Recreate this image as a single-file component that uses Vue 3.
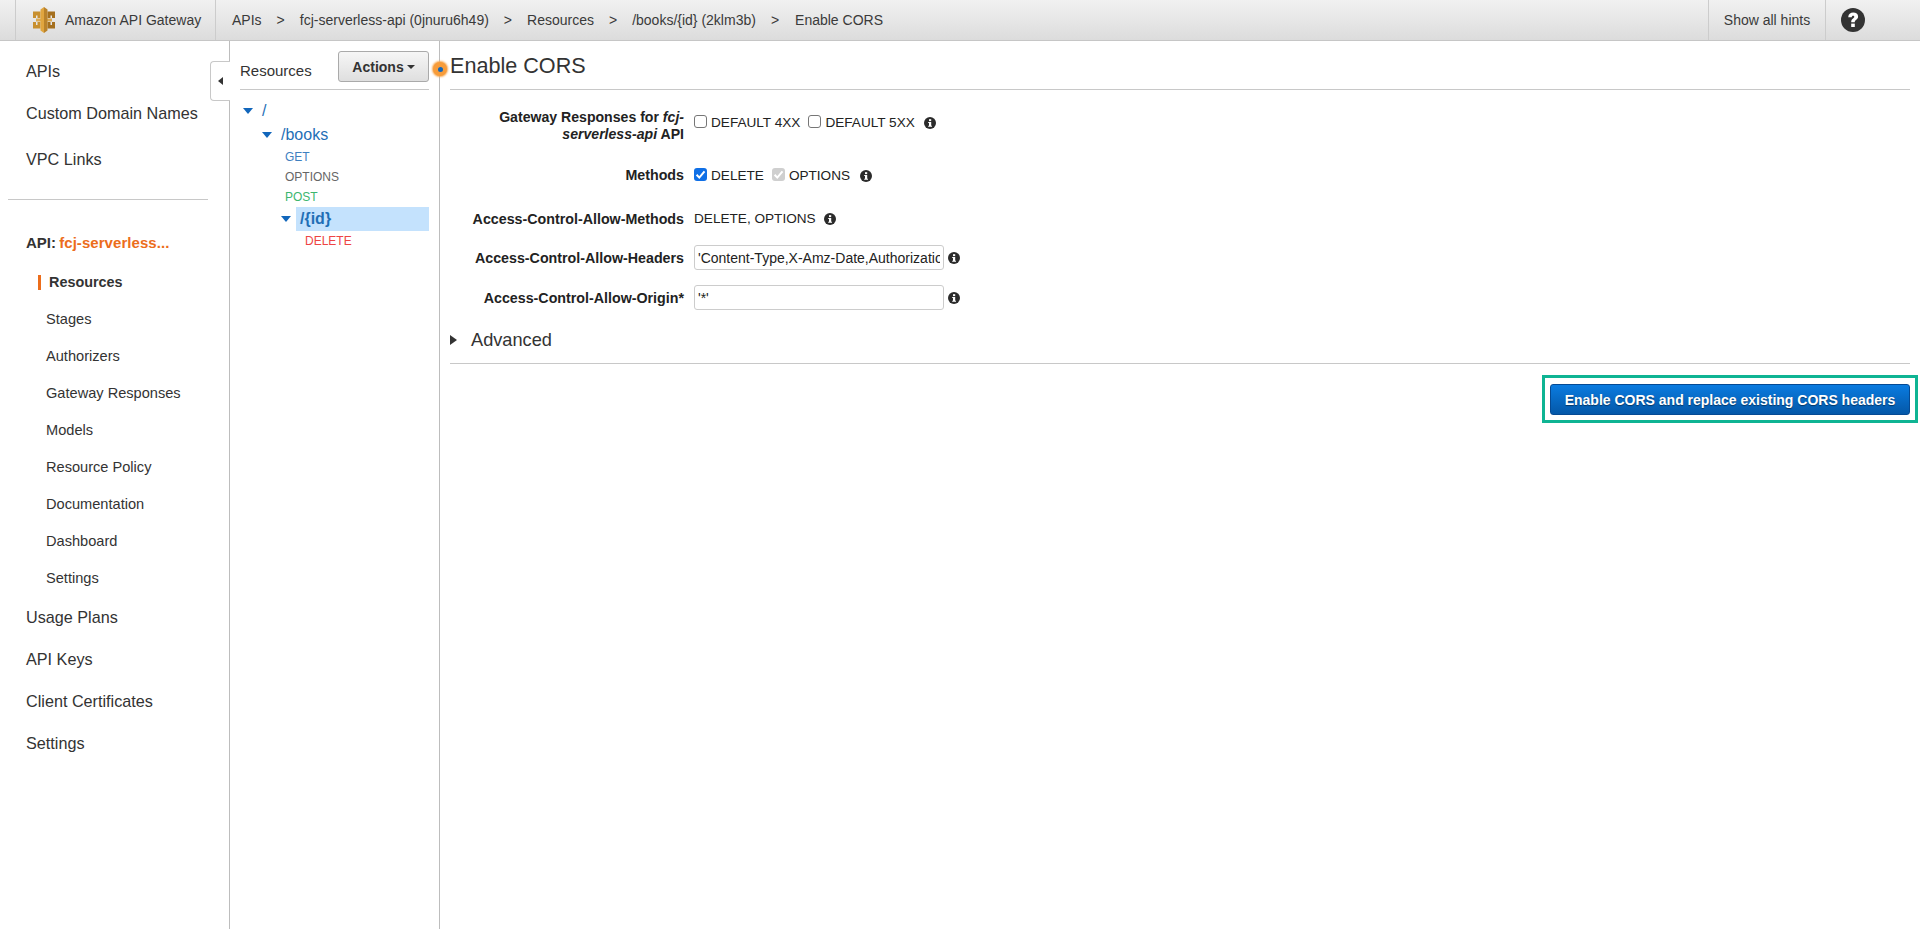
<script setup>
const crumbs = ['APIs', 'fcj-serverless-api (0jnuru6h49)', 'Resources', '/books/{id} (2klm3b)', 'Enable CORS']
const subNav = ['Stages', 'Authorizers', 'Gateway Responses', 'Models', 'Resource Policy', 'Documentation', 'Dashboard', 'Settings']
const bottomNav = ['Usage Plans', 'API Keys', 'Client Certificates', 'Settings']
</script>

<template>
  <div class="page">
    <header class="topbar">
      <div class="brand">
        <svg class="logo" viewBox="0 0 22 26" width="22" height="26">
          <path d="M0 4.5H7.5V11H4.5V8.5H3V11H0Z" fill="#c8902f" />
          <path d="M0 15H3V18H4.5V15H7.5V21.5H0Z" fill="#c8902f" />
          <path d="M14.5 4.5H22V11H19V8.5H17.5V11H14.5Z" fill="#a5701f" />
          <path d="M14.5 15H17.5V18H19V15H22V21.5H14.5Z" fill="#a5701f" />
          <rect x="3" y="11.5" width="16" height="3" fill="#dcaa52" />
          <path d="M7.5 2.5 11 0V26L7.5 23.5Z" fill="#e0a53f" />
          <path d="M11 0 14.5 2.5V23.5L11 26Z" fill="#b9822b" />
        </svg>
        <span>Amazon API Gateway</span>
      </div>
      <nav class="crumbs">
        <template v-for="(c, i) in crumbs" :key="c">
          <span v-if="i" class="sep">&gt;</span>
          <span class="crumb">{{ c }}</span>
        </template>
      </nav>
      <div class="hints">Show all hints</div>
      <div class="help">
        <svg viewBox="0 0 24 24" width="24" height="24">
          <circle cx="12" cy="12" r="12" fill="#333" />
          <path d="M7.2 9.2C7.4 6.2 9.4 4.6 12.2 4.6c2.9 0 4.9 1.6 4.9 4 0 1.7-.9 2.7-2.1 3.5-1 .7-1.2 1.1-1.2 2.2h-3.6c0-2.1.5-3 1.8-3.9.9-.7 1.3-1 1.3-1.6 0-.7-.5-1.1-1.2-1.1-.9 0-1.3.5-1.4 1.6Z" fill="#fff" />
          <rect x="10.2" y="15.6" width="3.6" height="3.4" fill="#fff" />
        </svg>
      </div>
    </header>

    <div class="body">
      <aside class="sidebar">
        <a class="nav first">APIs</a>
        <a class="nav second">Custom Domain Names</a>
        <a class="nav third">VPC Links</a>
        <hr class="nav-rule" />
        <div class="api-name"><b>API:</b> <b class="orange">fcj-serverless...</b></div>
        <div class="sub active">Resources</div>
        <div v-for="s in subNav" :key="s" class="sub">{{ s }}</div>
        <div class="bottom-nav">
          <a v-for="b in bottomNav" :key="b" class="nav bottom">{{ b }}</a>
        </div>
        <div class="collapse"><i></i></div>
      </aside>

      <section class="resources">
        <div class="res-head">
          <span>Resources</span>
          <button class="actions">Actions<i></i></button>
        </div>
        <ul class="tree">
          <li class="node"><i class="caret"></i>/</li>
          <li class="node lvl1"><i class="caret"></i>/books</li>
          <li class="method get">GET</li>
          <li class="method opt">OPTIONS</li>
          <li class="method post">POST</li>
          <li class="node lvl2"><i class="caret"></i><span class="selected">/{id}</span></li>
          <li class="method del">DELETE</li>
        </ul>
        <span class="pulse"><i></i></span>
      </section>

      <main class="main">
        <h1>Enable CORS</h1>
        <div class="form">
          <div class="row row-gw">
            <label class="lab">Gateway Responses for <em>fcj-serverless-api</em> API</label>
            <div class="val">
              <span class="box"></span><span class="opt-text">DEFAULT 4XX</span>
              <span class="box box2"></span><span class="opt-text">DEFAULT 5XX</span>
              <svg class="info" viewBox="0 0 12 12"><use href="#info" /></svg>
            </div>
          </div>
          <div class="row row-m">
            <label class="lab">Methods</label>
            <div class="val">
              <span class="box on"><svg viewBox="0 0 13 13"><path d="M2.6 6.8 5.3 9.6 10.5 3.4" fill="none" stroke="#fff" stroke-width="2" /></svg></span><span class="opt-text">DELETE</span>
              <span class="box box2 dis"><svg viewBox="0 0 13 13"><path d="M2.6 6.8 5.3 9.6 10.5 3.4" fill="none" stroke="#fff" stroke-width="2" /></svg></span><span class="opt-text">OPTIONS</span>
              <svg class="info" viewBox="0 0 12 12"><use href="#info" /></svg>
            </div>
          </div>
          <div class="row row-a">
            <label class="lab">Access-Control-Allow-Methods</label>
            <div class="val up">
              <span>DELETE, OPTIONS</span>
              <svg class="info" viewBox="0 0 12 12"><use href="#info" /></svg>
            </div>
          </div>
          <div class="row row-i">
            <label class="lab">Access-Control-Allow-Headers</label>
            <div class="val">
              <input class="input" value="'Content-Type,X-Amz-Date,Authorization,X-Api-Key,X-Amz-Security-Token'" />
              <svg class="info tight" viewBox="0 0 12 12"><use href="#info" /></svg>
            </div>
          </div>
          <div class="row row-i">
            <label class="lab">Access-Control-Allow-Origin*</label>
            <div class="val">
              <input class="input" value="'*'" />
              <svg class="info tight" viewBox="0 0 12 12"><use href="#info" /></svg>
            </div>
          </div>
        </div>
        <div class="advanced"><i></i>Advanced</div>
        <div class="actions-row">
          <div class="highlight">
            <button class="primary">Enable CORS and replace existing CORS headers</button>
          </div>
        </div>
      </main>
    </div>

    <svg width="0" height="0" class="defs">
      <defs>
        <g id="info">
          <circle cx="6" cy="6" r="6" fill="#2b2b2b" />
          <rect x="5" y="2.2" width="2.2" height="1.9" fill="#fff" />
          <path d="M4.2 5h3v3.7h.8v1.1H4.2V8.7H5V6.1h-.8Z" fill="#fff" />
        </g>
      </defs>
    </svg>
  </div>
</template>

<style>
html, body { margin: 0; background: #fff; }
</style>

<style scoped>
.page {
  height: 929px;
  display: flex;
  flex-direction: column;
  overflow: hidden;
  font-family: "Liberation Sans", Arial, sans-serif;
  color: #333;
  font-size: 14px;
}
.defs { position: absolute; }

.topbar {
  height: 40px;
  flex: none;
  display: flex;
  align-items: center;
  background: linear-gradient(#f1f1f1, #dcdcdc);
  border-bottom: 1px solid #c6c6c6;
  padding-left: 15px;
  font-size: 14px;
  color: #3a3a3a;
}
.brand {
  display: flex;
  align-items: center;
  height: 100%;
  width: 201px;
  box-sizing: border-box;
  border-left: 1px solid #ccc;
  border-right: 1px solid #ccc;
  padding-left: 17px;
}
.logo { margin-right: 10px; }
.crumbs {
  flex: 1;
  display: flex;
  align-items: center;
  padding-left: 16px;
}
.sep { margin: 0 15px 0 15px; }
.crumb:last-child { margin-left: 1px; }
.hints {
  height: 100%;
  width: 118px;
  box-sizing: border-box;
  border-left: 1px solid #ccc;
  border-right: 1px solid #ccc;
  display: flex;
  align-items: center;
  justify-content: center;
}
.help {
  width: 94px;
  height: 100%;
  display: flex;
  align-items: center;
  box-sizing: border-box;
  padding-left: 15px;
}

.body { flex: 1; display: flex; min-height: 0; }

.sidebar {
  width: 230px;
  flex: none;
  box-sizing: border-box;
  border-right: 1px solid #bdbdbd;
  position: relative;
  padding-top: 20px;
}
.nav {
  display: block;
  font-size: 16.2px;
  line-height: 20px;
  padding-left: 26px;
  color: #333;
}
.second { margin-top: 22px; }
.third { margin-top: 26px; }
.nav-rule {
  border: 0;
  border-top: 1px solid #c8c8c8;
  margin: 30px 21px 0 8px;
}
.api-name {
  padding-left: 26px;
  margin-top: 33px;
  font-size: 15px;
  line-height: 20px;
  word-spacing: -1px;
}
.orange { color: #ec6d1b; letter-spacing: .06px; }
.sub {
  font-size: 14.6px;
  line-height: 37px;
  padding-left: 46px;
  color: #333;
  position: relative;
}
.sub.active { font-weight: bold; font-size: 14.4px; padding-left: 49px; margin-top: 11px; }
.sub.active::before {
  content: "";
  position: absolute;
  left: 38px;
  top: 11px;
  width: 3px;
  height: 15px;
  background: #ec6d1b;
}
.bottom-nav { margin-top: 10px; }
.bottom { line-height: 20px; margin-bottom: 22px; }
.collapse {
  position: absolute;
  right: -1px;
  top: 20px;
  width: 19px;
  height: 38px;
  background: #fff;
  border: 1px solid #c8c8c8;
  border-right: 0;
  border-radius: 4px 0 0 4px;
  display: flex;
  align-items: center;
  justify-content: center;
}
.collapse i {
  width: 0;
  height: 0;
  border: 4px solid transparent;
  border-left: 0;
  border-right: 5px solid #333;
}

.resources {
  width: 210px;
  flex: none;
  box-sizing: border-box;
  border-right: 1px solid #bdbdbd;
  padding: 10px 10px 0 10px;
  position: relative;
}
.res-head {
  height: 39px;
  box-sizing: border-box;
  border-bottom: 1px solid #c8c8c8;
  display: flex;
  justify-content: space-between;
  align-items: flex-start;
  font-size: 15px;
}
.res-head > span { margin-top: 11px; }
.actions {
  width: 91px;
  height: 31px;
  border: 1px solid #aaa;
  border-radius: 3px;
  background: linear-gradient(#f6f6f6, #dfdfdf);
  font: bold 14px "Liberation Sans", Arial, sans-serif;
  color: #333;
  padding: 0;
  display: flex;
  align-items: center;
  justify-content: center;
}
.actions i {
  margin-left: 3px;
  border: 4px solid transparent;
  border-top: 4px solid #333;
  border-bottom: 0;
}
.tree { list-style: none; margin: 0; padding: 9px 0 0; }
.node {
  font-size: 16px;
  line-height: 24px;
  color: #1f6fb6;
  display: flex;
  align-items: center;
}
.caret {
  width: 0;
  height: 0;
  margin: 0 9px 0 3px;
  border: 5px solid transparent;
  border-top: 6px solid #1166bb;
  border-bottom: 0;
}
.lvl1 { padding-left: 19px; }
.lvl2 { padding-left: 38px; height: 24px; margin-top: 0; }
.lvl2 .caret { margin-right: 5px; }
.selected {
  flex: 1;
  background: #c4e2fd;
  line-height: 24px;
  padding-left: 4px;
  font-weight: bold;
}
.method { font-size: 12px; line-height: 20px; padding-left: 45px; }
.get { color: #3f80bf; }
.opt { color: #666; }
.post { color: #3cb66e; }
.del { color: #ee4444; padding-left: 65px; }
.pulse {
  position: absolute;
  right: -8px;
  top: 21px;
  width: 14px;
  height: 14px;
  border-radius: 50%;
  background: #f79c3a;
  box-shadow: 0 0 2px 1px #f8a850;
  display: flex;
  align-items: center;
  justify-content: center;
  z-index: 2;
}
.pulse i { width: 5px; height: 5px; border-radius: 50%; background: #1166bb; }

.main { flex: 1; padding: 0 10px 0 10px; min-width: 0; }
h1 {
  margin: 0;
  height: 49px;
  box-sizing: border-box;
  border-bottom: 1px solid #c8c8c8;
  font-size: 21.6px;
  font-weight: normal;
  line-height: 49px;
  color: #333;
}
.form { padding-top: 19px; font-size: 14px; }
.row { display: flex; }
.lab {
  width: 234px;
  flex: none;
  text-align: right;
  font-weight: bold;
  font-size: 14.25px;
  line-height: 17px;
  margin-right: 10px;
  color: #222;
}
.val { display: flex; align-items: center; color: #222; font-size: 13.6px; }
.row-gw { height: 49px; }
.row-gw .val { height: 27px; }
.row-gw .lab { padding-left: 30px; box-sizing: border-box; font-size: 14.1px; }
.row-gw .info { margin-left: 9px; }
.row-m { height: 46px; padding-top: 9px; box-sizing: border-box; }
.row-m .val { height: 17px; }
.row-a { height: 41px; padding-top: 7px; box-sizing: border-box; }
.row-a .up { height: 17px; margin-top: -1px; }
.row-a .info { margin-left: 8px; }
.row-i { height: 40px; }
.row-i .val { height: 25px; }
.row-i .lab { line-height: 27px; }
.box {
  width: 13px;
  height: 13px;
  box-sizing: border-box;
  border: 1px solid #767676;
  border-radius: 3px;
  background: #fff;
  margin-right: 4px;
  margin-top: -2px;
  display: inline-block;
}
.box svg { display: block; width: 13px; height: 13px; }
.box.on { background: #0f6fe6; border: 0; }
.box.dis { background: #cfcfcf; border: 0; }
.box2 { margin-left: 8px; }
.info { width: 12px; height: 12px; margin-left: 10px; }
.tight { margin-left: 4px; }
.input {
  width: 250px;
  height: 25px;
  box-sizing: border-box;
  border: 1px solid #ccc;
  border-radius: 3px;
  padding: 0 3px;
  font: 14px "Liberation Sans", Arial, sans-serif;
  color: #222;
  outline: none;
}
.advanced {
  display: flex;
  align-items: center;
  height: 38px;
  padding-bottom: 4px;
  margin-top: -4px;
  font-size: 18.2px;
  color: #333;
  border-bottom: 1px solid #c8c8c8;
}
.advanced i {
  width: 0;
  height: 0;
  margin-right: 14px;
  border: 5.5px solid transparent;
  border-left: 7px solid #333;
  border-right: 0;
}
.actions-row { display: flex; justify-content: flex-end; margin-right: -8px; margin-top: 11px; }
.highlight { border: 3px solid #0fb493; padding: 6px 5px 5px; }
.primary {
  width: 360px;
  height: 31px;
  border: 1px solid #054a94;
  border-radius: 3px;
  background: linear-gradient(#0a7be0, #0458a8);
  color: #fff;
  font: bold 14px "Liberation Sans", Arial, sans-serif;
  text-shadow: 0 1px 1px rgba(0, 0, 0, .45);
  padding: 0;
  display: block;
}
</style>
